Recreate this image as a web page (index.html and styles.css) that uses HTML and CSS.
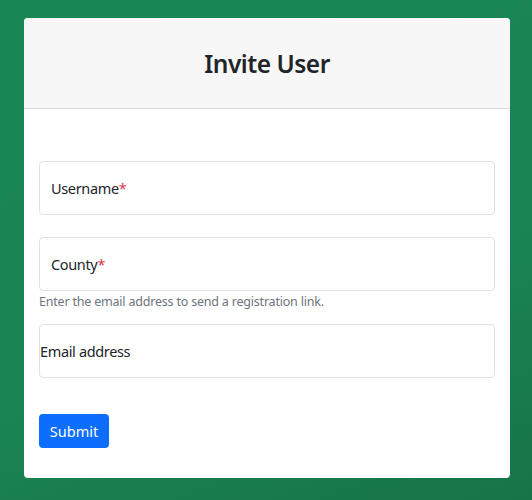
FILE: index.html
```html
<!DOCTYPE html>
<html>
<head>
<meta charset="utf-8">
<link rel="stylesheet" href="styles.css">
</head>
<body>
<div class="card">
  <div class="card-header"><h1>Invite User</h1></div>
  <form class="card-body">
    <div class="field">
      <div class="input"><span class="label">Username<span class="req">*</span></span></div>
    </div>
    <div class="field">
      <div class="input"><span class="label">County<span class="req">*</span></span></div>
      <div class="help">Enter the email address to send a registration link.</div>
    </div>
    <div class="field">
      <div class="input flush"><span class="label">Email address</span></div>
    </div>
    <button type="button" class="btn">Submit</button>
  </form>
</div>
</body>
</html>
```
FILE: styles.css
```css
html, body { margin: 0; height: 100%; }
body {
  background: linear-gradient(160deg, #1a8756 0%, #198454 60%, #177449 100%);
  font-family: "Noto Sans", "Open Sans", sans-serif;
  color: #212529;
  padding: 18px 22px 0 24px;
  box-sizing: border-box;
}
.card {
  background: #fff;
  border-radius: 4px;
  overflow: hidden;
  width: 486px;
}
.card-header {
  background: #f7f7f7;
  border-bottom: 1px solid #dcdcdc;
  height: 90px;
  display: flex;
  align-items: center;
  justify-content: center;
}
.card-header h1 {
  margin: 0;
  font-size: 24.5px;
  font-weight: 600;
  letter-spacing: -0.5px;
  color: #212529;
}
.card-body {
  padding: 52px 15px 30px 15px;
  display: flex;
  flex-direction: column;
}
.field { margin-bottom: 22px; }
.field:nth-child(2) { margin-bottom: 14px; }
.field:nth-child(3) { margin-bottom: 36px; }
.input {
  height: 54px;
  box-sizing: border-box;
  border: 1px solid #dee2e6;
  border-radius: 4px;
  display: flex;
  align-items: center;
  padding-left: 11px;
  font-size: 14.5px;
  letter-spacing: -0.35px;
  color: #212529;
}
.input.flush { padding-left: 0; }
.req { color: #dc3545; }
.help {
  font-size: 12.5px;
  letter-spacing: -0.2px;
  color: #6c757d;
  margin-top: 2px;
}
.btn {
  align-self: flex-start;
  background: #0d6efd;
  color: #fff;
  border: none;
  border-radius: 4px;
  height: 34px;
  width: 70px;
  font-family: inherit;
  font-size: 14.5px;
  padding: 0;
}
```
